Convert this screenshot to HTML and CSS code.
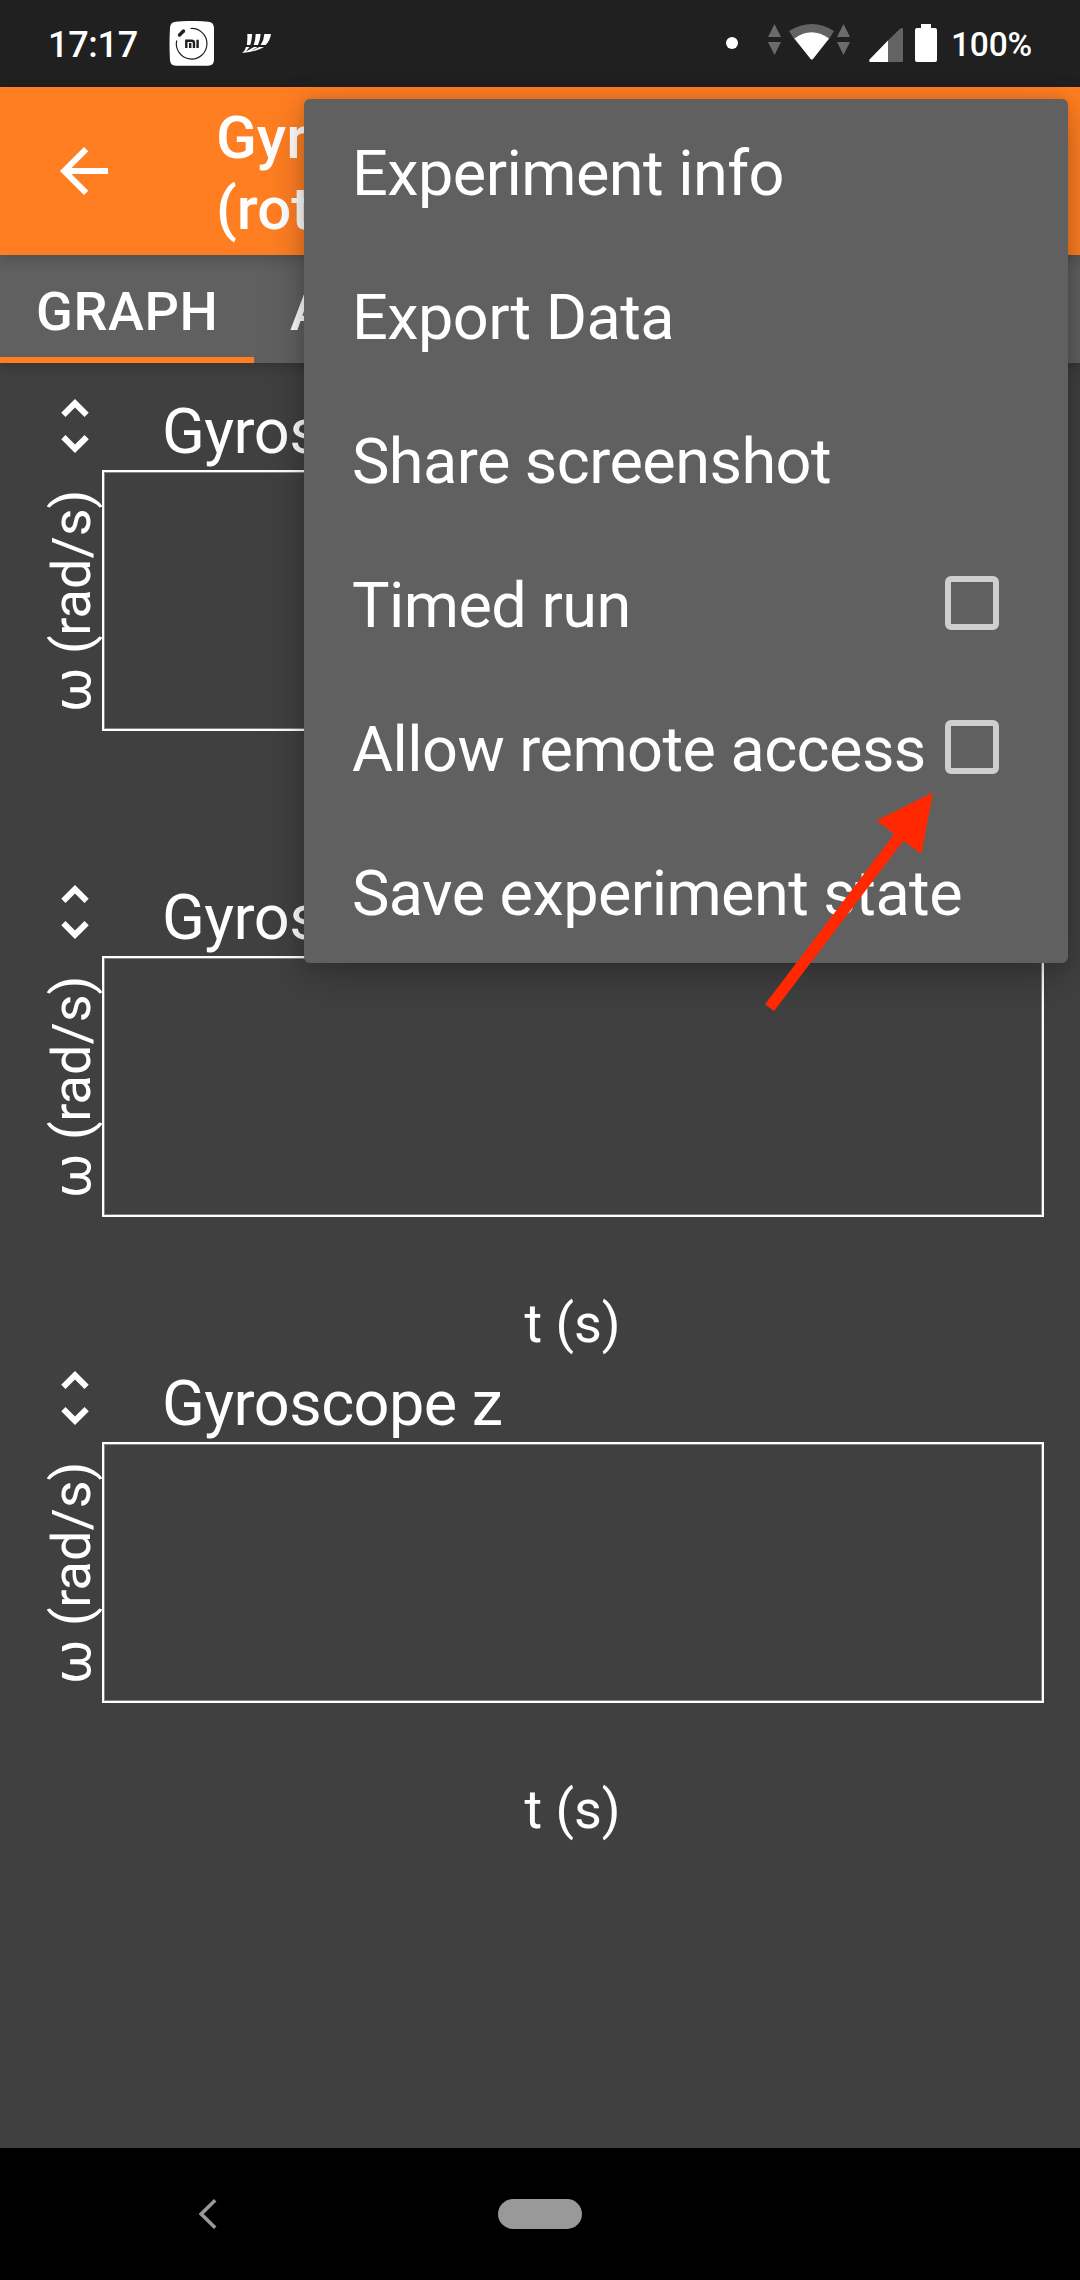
FILE: index.html
```html
<!DOCTYPE html>
<html lang="en">
<head>
<meta charset="utf-8">
<title>Gyroscope (rotation rate)</title>
<link rel="stylesheet" href="styles.css">
</head>
<body>
<div class="screen">
  <header class="status">
    <span class="clock">17:17</span>
    <svg class="mi" width="46" height="46" viewBox="0 0 46 46">
      <path fill="#fff" d="M7 .7Q23-.8 39 .7Q45 1 45 7V39Q45 44.700 39 44.700H7Q1 44.700 1 39Q0 23 1 7Q1 1 7 .7Z"/>
      <path fill="none" stroke="#202020" stroke-width="1.200" d="M21.500 7.500A15.300 15.300 0 1 1 7.700 19.500"/>
      <path stroke="#202020" stroke-width="3.400" stroke-linecap="round" d="M10.500 14L14.500 10"/>
      <path fill="none" stroke="#202020" stroke-width="2.400" d="M17.300 27V19.800H22.500Q25 19.800 25 22V27M21.200 22V27M28.600 18.800V27"/>
    </svg>
    <svg class="slashes" width="30" height="20" viewBox="0 0 30 20" fill="#fff">
      <path d="M5.300 0H10.200Q9.800 6 8.300 11H4.800Q5.600 6 5.300 0ZM13.700 0H18.700Q18 7 16 11H11.700Q13.500 6 13.700 0ZM22.300 0H29Q28 7 23.500 11H18.700Q22 6 22.300 0ZM4 13H7.500L4 17.500L12 13H15.500L9 17L17.500 13H22Q14 18 0 19Q3 17 4 13Z"/>
    </svg>
    <span class="spacer"></span>
    <svg class="indicators" width="213" height="42" viewBox="0 0 213 42">
      <circle cx="7" cy="21" r="6" fill="#fff"/>
      <path fill="#6b6b6b" d="M49.500 2L56 15H43ZM43 20H56L49.500 33ZM118.500 2L125 15H112ZM112 20H125L118.500 33Z"/>
      <path fill="#636363" d="M64 9Q87-5 109 9L104 17L87 38L69 17Z"/>
      <path fill="#fff" d="M69.500 16.500Q86.500 4 104 16.500L88.300 36.500Q86.800 38.500 85.200 36.500Z"/>
      <path fill="#636363" d="M178 7Q178 6 177 6L175 6.700L163 18.500V40H177Q178 40 178 39Z"/>
      <path fill="#fff" d="M163 18.500V40H145Q143.500 39.500 144.500 37.500Z"/>
      <path fill="#fff" d="M196 2H206V6H210Q212 6 212 8V38Q212 40 210 40H192Q190 40 190 38V8Q190 6 192 6H196Z"/>
    </svg>
    <span class="percent">100%</span>
  </header>

  <div class="appbar">
    <svg class="back" width="72" height="72" viewBox="0 0 24 24"><path fill="#fff" d="M20 11H7.830l5.590-5.590L12 4l-8 8 8 8 1.410-1.410L7.830 13H20v-2z"/></svg>
    <h1 class="title">Gyroscope<br>(rotation rate)</h1>
  </div>

  <nav class="tabs">
    <span class="tab active">GRAPH</span>
    <span class="tab">ABSOLUTE</span>
  </nav>

  <main class="graphs">
    <section class="graph">
      <div class="head">
        <svg width="72" height="72" viewBox="0 0 24 24"><path fill="#fff" d="M12 5.830L15.170 9l1.410-1.410L12 3 7.410 7.590 8.830 9 12 5.830zm0 12.340L8.830 15l-1.410 1.410L12 21l4.590-4.590L15.170 15 12 18.170z"/></svg>
        <h2>Gyroscope x</h2>
      </div>
      <div class="plot"><span class="ylabel">ω (rad/s)</span><div class="frame"></div></div>
      <div class="xlabel">t (s)</div>
    </section>
    <section class="graph">
      <div class="head">
        <svg width="72" height="72" viewBox="0 0 24 24"><path fill="#fff" d="M12 5.830L15.170 9l1.410-1.410L12 3 7.410 7.590 8.830 9 12 5.830zm0 12.340L8.830 15l-1.410 1.410L12 21l4.590-4.590L15.170 15 12 18.170z"/></svg>
        <h2>Gyroscope y</h2>
      </div>
      <div class="plot"><span class="ylabel">ω (rad/s)</span><div class="frame"></div></div>
      <div class="xlabel">t (s)</div>
    </section>
    <section class="graph">
      <div class="head">
        <svg width="72" height="72" viewBox="0 0 24 24"><path fill="#fff" d="M12 5.830L15.170 9l1.410-1.410L12 3 7.410 7.590 8.830 9 12 5.830zm0 12.340L8.830 15l-1.410 1.410L12 21l4.590-4.590L15.170 15 12 18.170z"/></svg>
        <h2>Gyroscope z</h2>
      </div>
      <div class="plot"><span class="ylabel">ω (rad/s)</span><div class="frame"></div></div>
      <div class="xlabel">t (s)</div>
    </section>
  </main>

  <footer class="navbar">
    <svg width="20" height="32" viewBox="0 0 20 32"><path fill="none" stroke="#999" stroke-width="3.600" d="M17.200 2.200L3.200 16L17.200 29.800"/></svg>
    <span class="pill"></span>
  </footer>

  <div class="menu">
    <div class="item">Experiment info</div>
    <div class="item">Export Data</div>
    <div class="item">Share screenshot</div>
    <div class="item">Timed run<span class="box"></span></div>
    <div class="item">Allow remote access<span class="box"></span></div>
    <div class="item">Save experiment state</div>
  </div>

  <svg class="pointer" width="170" height="221" viewBox="764 791 170 221"><path fill="#ff2800" d="M933 792.500L921.500 853.800L903.300 841L774 1011L765 1004.300L894.300 834L876.500 820.500Z"/></svg>
</div>
</body>
</html>
```
FILE: styles.css
```css
* { box-sizing: border-box; }

body {
  margin: 0;
  background: #404040;
  color: #fff;
  font-family: Roboto, "Noto Sans", sans-serif;
}

.screen {
  position: relative;
  display: flex;
  flex-direction: column;
  width: 1080px;
  height: 2280px;
  overflow: hidden;
}

/* status bar */
.status {
  display: flex;
  align-items: flex-start;
  height: 87px;
  background: #202020;
  font-weight: 500;
}
.clock { margin: 24px 0 0 48px; width: 121px; font-size: 36px; line-height: 42px; letter-spacing: -.3px; }
.mi { margin-top: 21px; }
.slashes { margin: 34px 0 0 27px; }
.spacer { flex: 1; }
.indicators { margin: 22px 13px 0 0; }
.percent { width: 129px; margin-top: 26px; font-size: 33.500px; line-height: 38px; letter-spacing: -.2px; }

/* app bar */
.appbar {
  position: relative;
  z-index: 2;
  display: flex;
  align-items: center;
  height: 168px;
  padding-left: 48px;
  background: #ff7e22;
  box-shadow: 0 4px 14px rgba(0, 0, 0, .2);
}
.title {
  margin: 5px 0 0 96px;
  font-size: 60px;
  font-weight: 500;
  line-height: 70.300px;
}

.tabs {
  position: relative;
  z-index: 1;
  display: flex;
  height: 108px;
  background: #606060;
  box-shadow: 0 4px 12px rgba(0, 0, 0, .2);
}
.tab {
  padding: 25px 36px 0;
  font-size: 54px;
  font-weight: 500;
  line-height: 63px;
  letter-spacing: .6px;
}
.active { width: 254px; border-bottom: 6px solid #ff7e22; }

/* graphs */
.graphs { flex: 1; padding-top: 21px; }
.graph { height: 486px; }
.head {
  display: flex;
  height: 86px;
  padding: 6px 0 0 39px;
}
.head h2 {
  margin: 5px 0 0 51px;
  font-size: 63px;
  font-weight: 400;
  line-height: 74px;
  letter-spacing: -.55px;
}
.head svg { flex: none; }
.plot { display: flex; height: 261px; }
.ylabel {
  width: 102px;
  padding-right: 44px;
  writing-mode: vertical-rl;
  transform: rotate(180deg);
  font-size: 54px;
  line-height: 56px;
  text-align: center;
}
.frame {
  width: 942px;
  border: 2px solid #fff;
  box-shadow: inset 0 0 0 1px rgba(255, 255, 255, .35);
}
.xlabel {
  width: 943px;
  margin: 75px 0 0 101px;
  font-size: 54px;
  line-height: 64px;
  text-align: center;
}

/* system navigation */
.navbar {
  display: flex;
  align-items: center;
  height: 132px;
  padding-left: 198px;
  background: #000;
}
.pill { width: 84px; height: 30px; margin-left: 280px; border-radius: 15px; background: #999; }

/* overflow menu */
.menu {
  position: absolute;
  z-index: 5;
  left: 304px;
  top: 99px;
  width: 764px;
  height: 864px;
  border-radius: 6px;
  background: #606060;
  box-shadow: 0 14px 40px rgba(0, 0, 0, .25), 0 0 14px rgba(0, 0, 0, .12);
}
.item {
  display: flex;
  align-items: center;
  justify-content: space-between;
  height: 144px;
  padding: 5px 69px 0 48px;
  font-size: 63px;
  letter-spacing: -.55px;
  white-space: nowrap;
}
.box {
  width: 54px;
  height: 54px;
  margin-top: -5px;
  border: 6px solid #cfcfcf;
  border-radius: 6px;
}

/* annotation arrow */
.pointer { position: absolute; z-index: 6; left: 764px; top: 791px; }
```
